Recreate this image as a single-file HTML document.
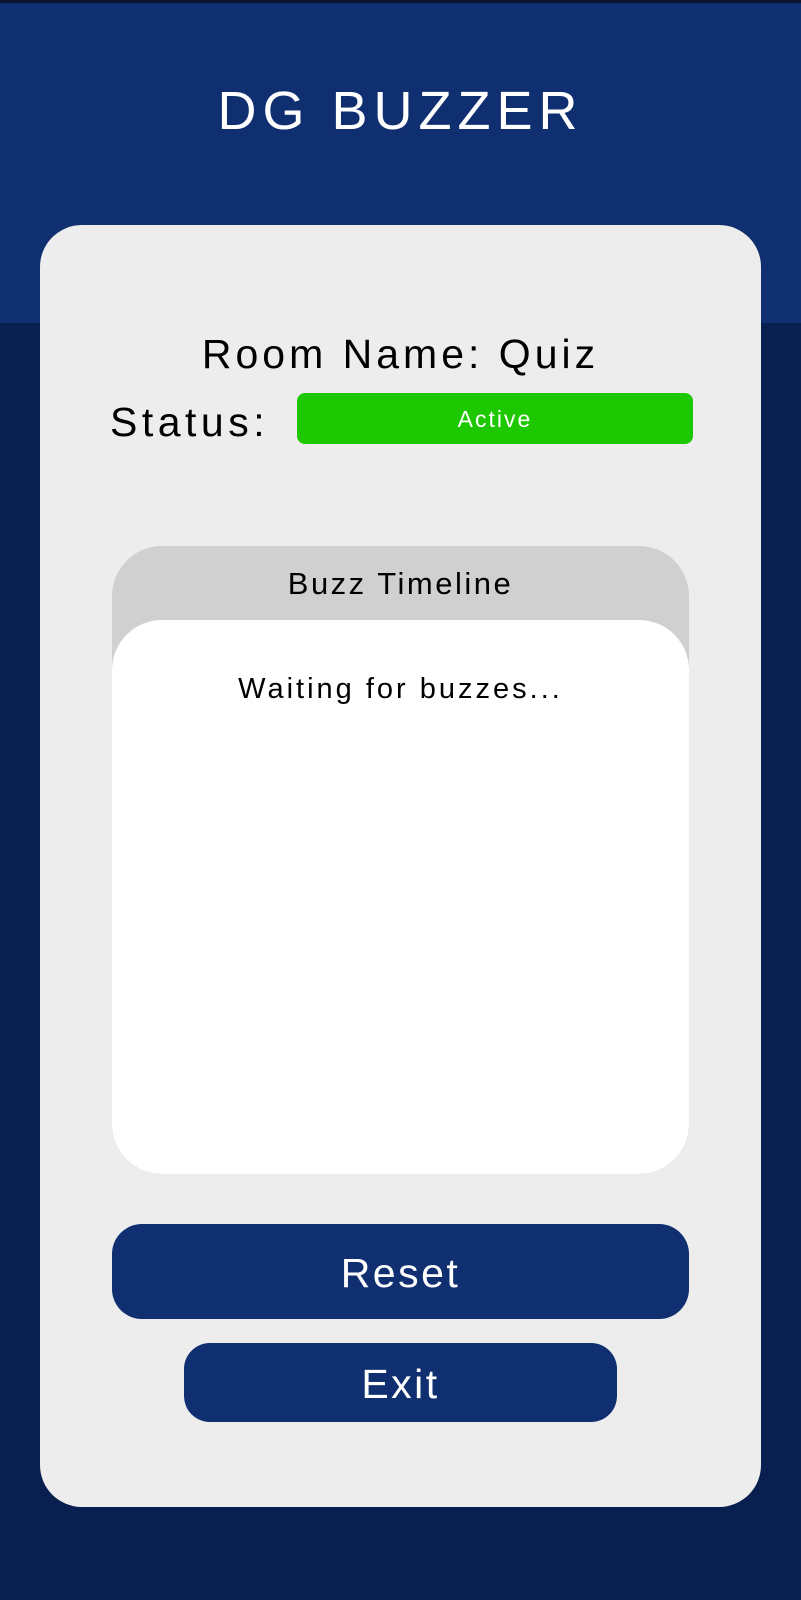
<!DOCTYPE html>
<html><head><meta charset="utf-8"><style>
html,body{margin:0;padding:0;width:801px;height:1600px;overflow:hidden;background:#081f50;font-family:"Liberation Sans",sans-serif;}
.top{position:absolute;left:0;top:0;width:801px;height:323px;background:#0f2f70;border-top:3px solid #0a1530;box-sizing:border-box}
.title{position:absolute;left:0;width:801px;top:80px;text-align:center;color:#fff;font-size:54px;letter-spacing:6px;}
.card{position:absolute;left:40px;top:225px;width:721px;height:1282px;background:#ededed;border-radius:42px}
.abs{position:absolute}
.room{left:0;width:801px;top:331px;text-align:center;font-size:41px;letter-spacing:4px;color:#000}
.status{left:110px;top:399px;font-size:41px;letter-spacing:4.5px;color:#000}
.green{left:297px;top:393px;width:396px;height:51px;background:#1ec800;border-radius:8px;color:#fff;text-align:center;line-height:53px;font-size:23px;letter-spacing:2px}
.tl{left:112px;top:546px;width:577px;height:628px;background:#d0d0d0;border-radius:50px;overflow:hidden}
.tlh{position:absolute;left:0;width:100%;top:20px;text-align:center;font-size:31px;letter-spacing:2.5px}
.tlw{position:absolute;left:0;top:74px;width:100%;height:554px;background:#fff;border-radius:50px}
.wait{position:absolute;left:0;width:100%;top:53px;text-align:center;font-size:29px;letter-spacing:3px}
.btn{background:#0f2f70;color:#fff;text-align:center;font-size:41px;letter-spacing:2.5px}
</style></head><body>
<div class="top"></div>
<div class="title abs">DG BUZZER</div>
<div class="card"></div>
<div class="abs room">Room Name: Quiz</div>
<div class="abs status">Status:</div>
<div class="abs green">Active</div>
<div class="abs tl"><div class="tlh">Buzz Timeline</div><div class="tlw"><div class="wait">Waiting for buzzes...</div></div></div>
<div class="abs btn" style="left:112px;top:1224px;width:577px;height:95px;line-height:99px;border-radius:30px">Reset</div>
<div class="abs btn" style="left:184px;top:1343px;width:433px;height:79px;line-height:83px;border-radius:26px">Exit</div>
</body></html>
